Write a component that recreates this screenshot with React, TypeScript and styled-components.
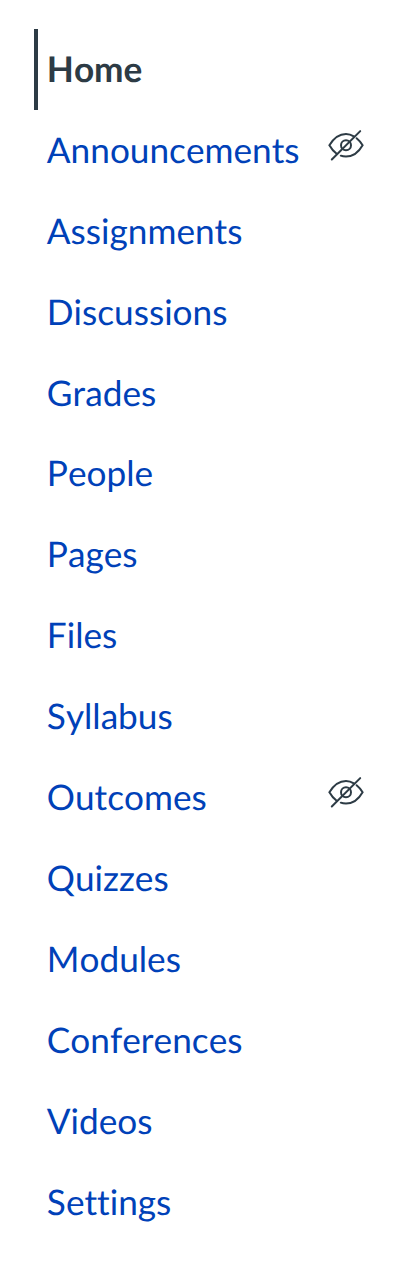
import React from "react"
import styled, { createGlobalStyle } from "styled-components";

const COLORS = {
  link: "#0041b8",
  text: "#2d3b45",
  background: "#ffffff"
}

const ITEMS: { name: string, active?: boolean, hidden?: boolean }[] = [
  { name: "Home", active: true },
  { name: "Announcements", hidden: true },
  { name: "Assignments" },
  { name: "Discussions" },
  { name: "Grades" },
  { name: "People" },
  { name: "Pages" },
  { name: "Files" },
  { name: "Syllabus" },
  { name: "Outcomes", hidden: true },
  { name: "Quizzes" },
  { name: "Modules" },
  { name: "Conferences" },
  { name: "Videos" },
  { name: "Settings" }
]

const HiddenIcon = () => (
  <IconSvg viewBox="0 0 36 32" aria-hidden="true">
    <path d="M25.8 7.4C23.5 5.9 21 5 18 5C10.5 5 5 10.3 1.4 16.3C3.4 19.9 5.9 22.8 8.9 25" />
    <path d="M28.6 9.2C31 11.1 33 13.5 34.6 16.3C30.5 23.6 25 27.6 18 27.6C16 27.6 14.2 27.3 12.8 26.7" />
    <circle cx="18" cy="16.3" r="5" />
    <path d="M3.8 30.5L32.2 2.1" />
  </IconSvg>
)

export default function App() {
  return (
    <>
      <GlobalStyle />
      <CourseNav>
        <NavList>
          {ITEMS.map(item => (
            <NavItem key={item.name}>
              <NavLink href="#" $active={item.active}>
                {item.name}
                {item.hidden && <HiddenIcon />}
              </NavLink>
            </NavItem>
          ))}
        </NavList>
      </CourseNav>
    </>
  )
}

const GlobalStyle = createGlobalStyle`
  body {
    margin: 0;
    background: ${COLORS.background};
    font-family: Lato, "Liberation Sans", sans-serif;
    text-rendering: geometricPrecision;
  }
`;

const CourseNav = styled.nav`
  box-sizing: border-box;
  width: 414px;
  height: 1274px;
  padding: 29px 50px 0 34px;
`;

const NavList = styled.ul`
  list-style: none;
  margin: 0;
  padding: 0;
`;

const NavItem = styled.li`
  height: 80.92px;
`;

const NavLink = styled.a<{ $active?: boolean }>`
  box-sizing: border-box;
  display: flex;
  justify-content: space-between;
  align-items: center;
  height: 100%;
  padding: 0 0 1.1px 8.8px;
  border-left: 4px solid ${props => props.$active ? COLORS.text : "transparent"};
  color: ${props => props.$active ? COLORS.text : COLORS.link};
  font-size: 35.2px;
  font-weight: ${props => props.$active ? 700 : 400};
  font-kerning: none;
  font-variant-ligatures: none;
  line-height: 44px;
  text-decoration: none;
`;

const IconSvg = styled.svg`
  width: 36px;
  height: 32px;
  margin-bottom: 9.4px;
  fill: none;
  stroke: ${COLORS.text};
  stroke-width: 2;
  stroke-linecap: round;
`;
